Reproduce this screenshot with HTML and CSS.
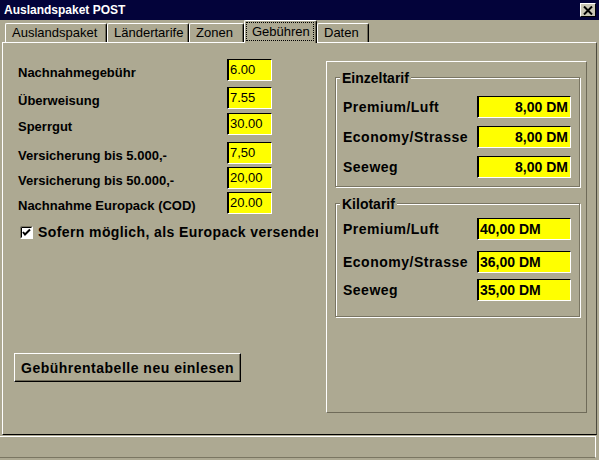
FILE: index.html
```html
<!DOCTYPE html>
<html lang="de">
<head>
<meta charset="utf-8">
<title>Auslandspaket POST</title>
<link rel="stylesheet" href="styles.css">
</head>
<body>
<div class="window">
  <div class="titlebar">
    <span class="title">Auslandspaket POST</span>
    <span class="close">
      <svg width="10" height="9" viewBox="0 0 10 9"><path d="M1 0.5 L9 8.5 M9 0.5 L1 8.5" stroke="#000" stroke-width="2" fill="none"/></svg>
    </span>
  </div>
  <div class="tabs">
    <div class="tab tab--aus">Auslandspaket</div>
    <div class="tab tab--laender">Ländertarife</div>
    <div class="tab tab--zonen">Zonen</div>
    <div class="tab tab--active"><span class="focus">Gebühren</span></div>
    <div class="tab tab--daten">Daten</div>
  </div>
  <div class="panel">
    <div class="left">
      <div class="fields">
        <div class="field-label">Nachnahmegebühr</div><div class="field-input">6.00</div>
        <div class="field-label">Überweisung</div><div class="field-input">7.55</div>
        <div class="field-label">Sperrgut</div><div class="field-input">30.00</div>
        <div class="field-label">Versicherung bis 5.000,-</div><div class="field-input">7,50</div>
        <div class="field-label">Versicherung bis 50.000,-</div><div class="field-input">20,00</div>
        <div class="field-label">Nachnahme Europack (COD)</div><div class="field-input">20.00</div>
      </div>
      <div class="check">
        <svg class="check-box" width="13" height="13" viewBox="0 0 13 13">
          <rect x="0" y="0" width="13" height="13" fill="#ffffff"/>
          <path d="M0.5 12.5 V0.5 H12.5" stroke="#7a7663" fill="none"/>
          <path d="M1.5 11.5 V1.5 H11.5" stroke="#000" fill="none"/>
          <path d="M3 6 L5 8.5 L10 3.5" stroke="#000" stroke-width="2" fill="none"/>
        </svg>
        <span class="check-label">Sofern möglich, als Europack versenden</span>
      </div>
      <button class="btn">Gebührentabelle neu einlesen</button>
    </div>
    <div class="frame">
      <div class="group group--einzel">
        <div class="group-title">Einzeltarif</div>
        <div class="rows rows--einzel">
          <div class="row-label">Premium/Luft</div><div class="value value--right">8,00 DM</div>
          <div class="row-label">Economy/Strasse</div><div class="value value--right">8,00 DM</div>
          <div class="row-label">Seeweg</div><div class="value value--right">8,00 DM</div>
        </div>
      </div>
      <div class="group group--kilo">
        <div class="group-title">Kilotarif</div>
        <div class="rows rows--kilo">
          <div class="row-label">Premium/Luft</div><div class="value">40,00 DM</div>
          <div class="row-label">Economy/Strasse</div><div class="value">36,00 DM</div>
          <div class="row-label">Seeweg</div><div class="value">35,00 DM</div>
        </div>
      </div>
    </div>
  </div>
  <div class="status"></div>
</div>
</body>
</html>
```
FILE: styles.css
```css
html, body {
  margin: 0;
  padding: 0;
  background: #ada992;
}

body {
  font-family: "Liberation Sans", Arial, sans-serif;
  color: #000;
}

.window {
  width: 599px;
  height: 460px;
  display: flex;
  flex-direction: column;
  background: #ada992;
  overflow: hidden;
}

/* Title bar */
.titlebar {
  height: 20px;
  flex: none;
  box-sizing: border-box;
  background: #03033a;
  display: flex;
  align-items: center;
  justify-content: space-between;
  padding: 0 3px 0 4px;
}

.title {
  color: #fff;
  font-weight: bold;
  font-size: 12px;
  line-height: 14px;
}

.close {
  width: 16px;
  height: 14px;
  box-sizing: border-box;
  background: #c9c6b4;
  border: 1px solid;
  border-color: #fff #000 #000 #fff;
  display: flex;
  align-items: center;
  justify-content: center;
}

/* Tabs */
.tabs {
  height: 22px;
  flex: none;
  display: flex;
  align-items: flex-end;
  padding-left: 5px;
  position: relative;
  z-index: 1;
}

.tab {
  height: 19px;
  box-sizing: border-box;
  border-left: 1px solid #fff;
  border-top: 1px solid #fff;
  border-right: 1px solid #000;
  box-shadow: inset -1px 0 #6e6a58;
  border-radius: 2px 2px 0 0;
  background: #ada992;
  font-size: 13px;
  line-height: 18px;
  padding-left: 6px;
  white-space: nowrap;
}

.tab--aus { width: 102px; }
.tab--laender { width: 82px; }
.tab--zonen { width: 55px; }
.tab--daten { width: 52px; }

.tab--active {
  width: 73px;
  height: 23px;
  margin-bottom: -1px;
  padding: 1px 2px 2px 1px;
}

.focus {
  display: block;
  height: 100%;
  box-sizing: border-box;
  border: 1px dotted #000;
  padding-left: 5px;
  line-height: 17px;
}

/* Main panel */
.panel {
  flex: none;
  height: 393px;
  box-sizing: border-box;
  margin: 0 2px;
  border: 1px solid;
  border-color: #fff #4c4a3e #000 #fff;
  display: flex;
}

.left {
  flex: none;
  width: 315px;
  box-sizing: border-box;
  padding: 16px 0 0 11px;
  overflow: hidden;
}

.fields {
  margin-left: 4px;
  display: grid;
  grid-template-columns: 209px 45px;
  grid-template-rows: 28px 26px 29px 25px 25px 22px;
  align-items: start;
}

.field-label {
  font-size: 13px;
  font-weight: bold;
  line-height: 22px;
  padding-top: 3px;
  white-space: nowrap;
}

.field-input {
  height: 22px;
  box-sizing: border-box;
  background: #ffff00;
  border: 1px solid;
  border-color: #000 #fff #fff #000;
  box-shadow: inset 1px 0 #000;
  font-size: 13px;
  line-height: 20px;
  padding-left: 2px;
}

.check {
  margin: 11px 0 0 6px;
  height: 14px;
  display: flex;
  align-items: center;
  gap: 5px;
  white-space: nowrap;
}

.check-box {
  flex: none;
  display: block;
}

.check-label {
  font-size: 14px;
  font-weight: bold;
  letter-spacing: 0.4px;
  line-height: 14px;
}

.btn {
  display: block;
  margin-top: 114px;
  width: 227px;
  height: 29px;
  box-sizing: border-box;
  background: #ada992;
  border: 1px solid;
  border-color: #fff #000 #000 #fff;
  box-shadow: inset -1px -1px #6e6a58;
  padding: 0 0 0 6px;
  text-align: left;
  font-family: "Liberation Sans", Arial, sans-serif;
  font-size: 14px;
  font-weight: bold;
  letter-spacing: 0.5px;
  color: #000;
  white-space: nowrap;
}

/* Right frame */
.frame {
  flex: none;
  margin: 18px 0 0 8px;
  width: 261px;
  height: 352px;
  box-sizing: border-box;
  border: 1px solid;
  border-color: #fff #6f6b59 #6f6b59 #fff;
  padding: 15px 0 0 8px;
  display: flex;
  flex-direction: column;
}

.group {
  width: 245px;
  box-sizing: border-box;
  border: 1px solid #7a7663;
  box-shadow: inset 1px 1px #fff, 1px 1px #fff;
  padding: 0 8px 8px 7px;
}

.group--kilo {
  margin-top: 16px;
  padding-bottom: 15px;
}

.group-title {
  width: fit-content;
  margin: -8px 0 0 -3px;
  padding: 0 2px;
  background: #ada992;
  font-size: 14px;
  font-weight: bold;
  line-height: 16px;
}

.rows {
  display: grid;
  grid-template-columns: 1fr 94px;
  align-items: start;
}

.rows--einzel {
  margin-top: 10px;
  grid-template-rows: 30px 30px 22px;
}

.rows--kilo {
  margin-top: 6px;
  grid-template-rows: 33px 28px 22px;
}

.row-label {
  font-size: 14px;
  font-weight: bold;
  letter-spacing: 0.5px;
  line-height: 22px;
  white-space: nowrap;
}

.value {
  height: 22px;
  box-sizing: border-box;
  background: #ffff00;
  border: 1px solid;
  border-color: #000 #fff #fff #000;
  box-shadow: inset 1px 0 #000;
  font-size: 14px;
  font-weight: bold;
  line-height: 20px;
  padding: 0 2px 0 2px;
  white-space: nowrap;
}

.value--right {
  text-align: right;
}

/* Status bar */
.status {
  flex: none;
  margin: 1px 3px 0 0;
  height: 22px;
  box-sizing: border-box;
  border-top: 1px solid #fff;
  border-right: 1px solid #fff;
  border-bottom: 1px solid #7a7662;
}
```
